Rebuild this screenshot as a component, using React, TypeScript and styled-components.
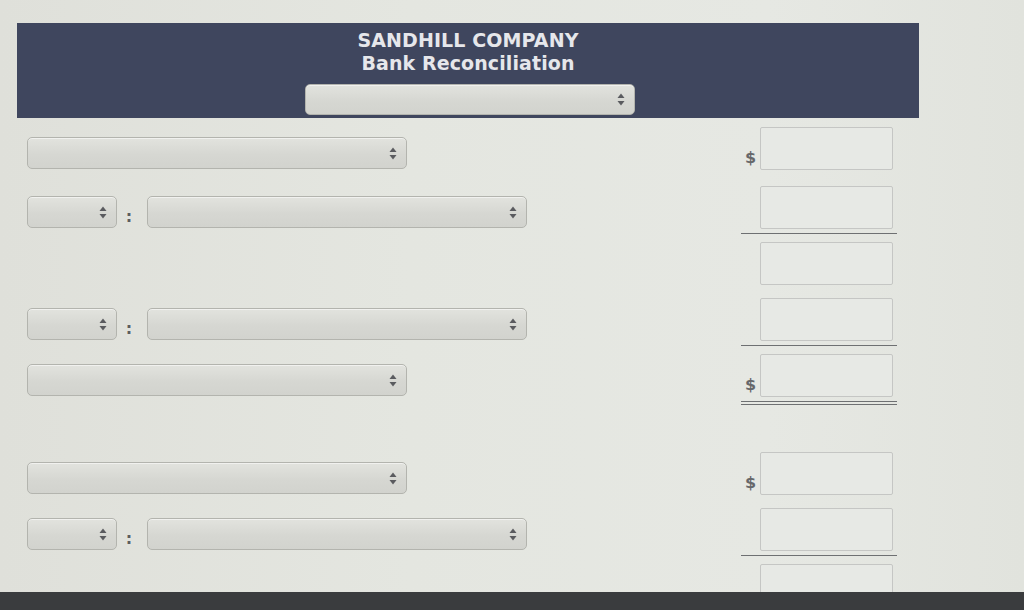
import React from "react";
import styled, { createGlobalStyle } from "styled-components";

type LineKind = "single" | "pair" | "none";

type Line = {
  kind: LineKind
  dollar?: boolean
  rule?: "single" | "double"
  height?: number
}

const lines: (Line | "gap")[] = [
  { kind: "single", dollar: true, height: 59 },
  { kind: "pair", rule: "single" },
  { kind: "none" },
  { kind: "pair", rule: "single" },
  { kind: "single", dollar: true, rule: "double" },
  "gap",
  { kind: "single", dollar: true },
  { kind: "pair", rule: "single" },
  { kind: "none" },
]

const GlobalStyle = createGlobalStyle`
  html, body {
    margin: 0;
    padding: 0;
    background: #3b3d3f;
  }
  #root {
    height: 610px;
    display: flex;
    flex-direction: column;
  }
`

const Screen = styled.div`
  height: 592px;
  overflow: hidden;
  background: linear-gradient(90deg, #dfe0da 0%, #e4e6e0 40%, #e6e8e3 75%, #e1e3dd 100%);
  padding-top: 23px;
  box-sizing: border-box;
  font-family: "DejaVu Sans", Verdana, sans-serif;
`

const Bezel = styled.div`
  flex: 1;
  background: #3a3c3e;
`

const Header = styled.div`
  margin-left: 17px;
  width: 902px;
  height: 95px;
  box-sizing: border-box;
  background: #3f465e;
  display: flex;
  flex-direction: column;
  align-items: center;
  padding-top: 6px;
  color: #e6e7eb;
  font-weight: bold;
  font-size: 19px;
  line-height: 23px;
`

const HeaderLine = styled.div`
  letter-spacing: 0.1px;
`

const SelectBox = styled.div<{ width: number; height?: number }>`
  width: ${({ width }) => width}px;
  height: ${({ height }) => height ?? 32}px;
  box-sizing: border-box;
  border: 1px solid #b3b4ae;
  border-radius: 5px;
  background: linear-gradient(180deg, #e2e3de 0%, #d6d7d2 55%, #d2d3ce 100%);
  box-shadow: inset 0 1px 0 rgba(255, 255, 255, 0.5);
  display: flex;
  align-items: center;
  justify-content: flex-end;
  padding-right: 9px;
  flex-shrink: 0;
`

const HeaderSelect = styled(SelectBox)`
  margin-top: 9px;
  margin-left: 4px;
`

const Arrows = () => (
  <svg width="8" height="13" viewBox="0 0 8 13">
    <path d="M4 0.5 L7.5 5 L0.5 5 Z" fill="#5a5b5f" />
    <path d="M4 12.5 L7.5 8 L0.5 8 Z" fill="#5a5b5f" />
  </svg>
)

const Form = styled.div`
  margin-top: 9px;
  display: flex;
  flex-direction: column;
`

const Row = styled.div<{ height: number }>`
  height: ${({ height }) => height}px;
  display: grid;
  grid-template-columns: 714px 156px;
  padding-left: 27px;
`

const Left = styled.div`
  padding-top: 10px;
  display: flex;
  align-items: flex-start;
`

const Colon = styled.span`
  width: 30px;
  box-sizing: border-box;
  padding-right: 6px;
  text-align: center;
  font-size: 16px;
  line-height: 32px;
  padding-top: 5px;
  color: #5c5d60;
  font-weight: bold;
`

const Right = styled.div`
  display: flex;
  flex-direction: column;
`

const AmountLine = styled.div`
  display: flex;
  align-items: flex-end;
  height: 43px;
`

const Dollar = styled.span`
  width: 19px;
  box-sizing: border-box;
  padding-left: 4px;
  padding-bottom: 3px;
  font-size: 16px;
  font-weight: bold;
  color: #66676a;
`

const AmountInput = styled.div`
  width: 133px;
  height: 43px;
  box-sizing: border-box;
  border: 1px solid #c5c6c4;
  border-radius: 2px;
  background: #e7e9e5;
`

const Rule = styled.div<{ double?: boolean }>`
  margin-top: 4px;
  width: 156px;
  height: ${({ double }) => (double ? 4 : 1)}px;
  box-sizing: border-box;
  border-top: 1px solid #6e7072;
  ${({ double }) => double && `border-bottom: 1px solid #6e7072;`}
`

const Gap = styled.div`
  height: 42px;
`

function LeftFields({ kind }: { kind: LineKind }) {
  if (kind === "single")
    return (
      <SelectBox width={380}>
        <Arrows />
      </SelectBox>
    )
  if (kind === "pair")
    return (
      <>
        <SelectBox width={90}>
          <Arrows />
        </SelectBox>
        <Colon>:</Colon>
        <SelectBox width={380}>
          <Arrows />
        </SelectBox>
      </>
    )
  return null
}

export default function App() {
  return (
    <>
      <GlobalStyle />
      <Screen>
        <Header>
          <HeaderLine>SANDHILL COMPANY</HeaderLine>
          <HeaderLine>Bank Reconciliation</HeaderLine>
          <HeaderSelect width={330} height={31}>
            <Arrows />
          </HeaderSelect>
        </Header>
        <Form>
          {lines.map((line, i) =>
            line === "gap" ? (
              <Gap key={i} />
            ) : (
              <Row key={i} height={line.height ?? 56}>
                <Left>
                  <LeftFields kind={line.kind} />
                </Left>
                <Right>
                  <AmountLine>
                    <Dollar>{line.dollar ? "$" : ""}</Dollar>
                    <AmountInput />
                  </AmountLine>
                  {line.rule && <Rule double={line.rule === "double"} />}
                </Right>
              </Row>
            )
          )}
        </Form>
      </Screen>
      <Bezel />
    </>
  )
}
